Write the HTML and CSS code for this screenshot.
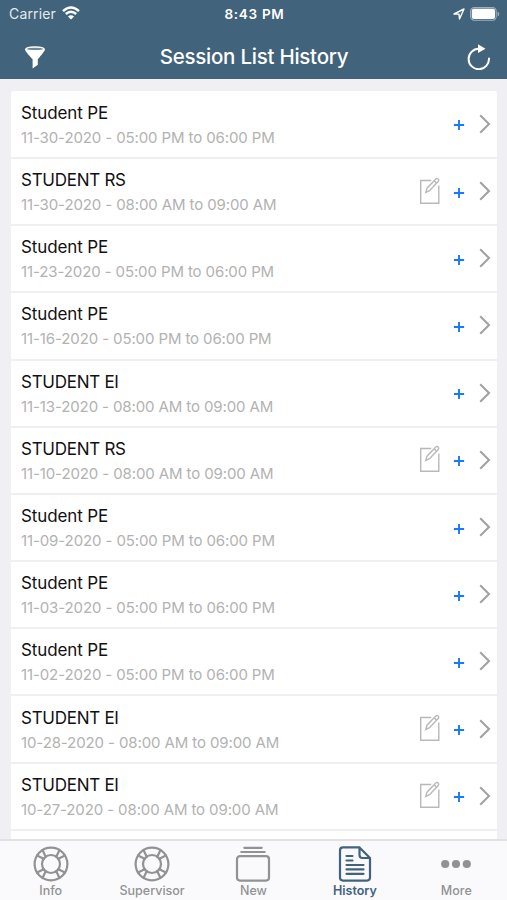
FILE: index.html
```
<!DOCTYPE html>
<html lang="en">
<head>
    <meta charset="UTF-8">
    <meta name="viewport" content="width=device-width, initial-scale=1">
    <title>Session List History</title>
    <link rel="stylesheet" href="styles.css">
</head>
<body>
<svg class="sprite">
    <symbol id="edit" viewBox="0 0 22 28">
        <path d="M12.2 3.5H1.7v22.8h18.1V8.5M6.8 15.4l1.2-4.2 8.8-9.2q1.2-1.2 2.4 0t0 2.5l-8.7 9.2zM15.2 3.8l2.4 2.4"/>
    </symbol>
    <symbol id="plus" viewBox="0 0 12 12">
        <path d="M6 .9v10.2M.9 6h10.2"/>
    </symbol>
    <symbol id="chevron" viewBox="0 0 12 20">
        <path d="M1.2 1.2 10 10l-8.8 8.8"/>
    </symbol>
    <symbol id="buoy" viewBox="0 0 36 36">
        <circle cx="18" cy="18" r="16.4"/>
        <circle cx="18" cy="18" r="9"/>
        <path d="M12.7 10.7 9.5 4M10.7 12.7 4 9.5M23.3 10.7 26.5 4M25.3 12.7 32 9.5M12.7 25.3 9.5 32M10.7 23.3 4 26.5M23.3 25.3 26.5 32M25.3 23.3 32 26.5"/>
    </symbol>
</svg>
<header>
    <div class="status">
        <div class="carrier">
            <span>Carrier</span>
            <svg class="wifi" viewBox="0 0 18 14">
                <path d="M1 5.1Q9-2.1 17 5.1M3.8 8Q9 3.4 14.2 8"/>
                <path class="fill" d="M9 13.5 5.9 10.4Q9 7.9 12.1 10.4z"/>
            </svg>
        </div>
        <div class="time">8:43 PM</div>
        <div class="power">
            <svg class="location" viewBox="0 0 12 12">
                <path d="M1 6 11 1 6.5 11 6 6.1z"/>
            </svg>
            <svg class="battery" viewBox="0 0 30 14">
                <rect class="shell" x=".6" y=".6" width="25.6" height="12.6" rx="3.6"/>
                <rect class="level" x="1.8" y="1.8" width="23.2" height="10.2" rx="2"/>
                <path class="tip" d="M27.6 4.6v4.8q1.7-.8 1.7-2.4t-1.7-2.4z"/>
            </svg>
        </div>
    </div>
    <div class="nav">
        <svg class="filter" viewBox="0 0 20 23">
            <path class="fill" d="M0 3.2Q.3.3 10 .3t10 2.9c0 1.8-3.6 5.6-7.2 10v5.6L7.6 22.5v-9.3C3.6 8.8 0 5 0 3.2z"/>
            <ellipse cx="10" cy="2.9" rx="8" ry="1.2"/>
        </svg>
        <h1>Session List History</h1>
        <svg class="reload" viewBox="0 0 24 26">
            <path class="line" d="M22 14.5A10.2 10.2 0 1 1 11.8 4.8"/>
            <path class="fill" d="M11 .2 18.5 4.7l-7.5 4.2z"/>
        </svg>
    </div>
</header>
<main>
    <ul class="sessions">
        <li>
            <div class="info"><h2>Student PE</h2><p>11-30-2020 - 05:00 PM to 06:00 PM</p></div>
            <svg class="plus"><use href="#plus"/></svg>
            <svg class="chevron"><use href="#chevron"/></svg>
        </li>
        <li>
            <div class="info"><h2 class="upper">STUDENT RS</h2><p>11-30-2020 - 08:00 AM to 09:00 AM</p></div>
            <svg class="edit"><use href="#edit"/></svg>
            <svg class="plus"><use href="#plus"/></svg>
            <svg class="chevron"><use href="#chevron"/></svg>
        </li>
        <li>
            <div class="info"><h2>Student PE</h2><p>11-23-2020 - 05:00 PM to 06:00 PM</p></div>
            <svg class="plus"><use href="#plus"/></svg>
            <svg class="chevron"><use href="#chevron"/></svg>
        </li>
        <li>
            <div class="info"><h2>Student PE</h2><p>11-16-2020 - 05:00 PM to 06:00 PM</p></div>
            <svg class="plus"><use href="#plus"/></svg>
            <svg class="chevron"><use href="#chevron"/></svg>
        </li>
        <li>
            <div class="info"><h2 class="upper">STUDENT EI</h2><p>11-13-2020 - 08:00 AM to 09:00 AM</p></div>
            <svg class="plus"><use href="#plus"/></svg>
            <svg class="chevron"><use href="#chevron"/></svg>
        </li>
        <li>
            <div class="info"><h2 class="upper">STUDENT RS</h2><p>11-10-2020 - 08:00 AM to 09:00 AM</p></div>
            <svg class="edit"><use href="#edit"/></svg>
            <svg class="plus"><use href="#plus"/></svg>
            <svg class="chevron"><use href="#chevron"/></svg>
        </li>
        <li>
            <div class="info"><h2>Student PE</h2><p>11-09-2020 - 05:00 PM to 06:00 PM</p></div>
            <svg class="plus"><use href="#plus"/></svg>
            <svg class="chevron"><use href="#chevron"/></svg>
        </li>
        <li>
            <div class="info"><h2>Student PE</h2><p>11-03-2020 - 05:00 PM to 06:00 PM</p></div>
            <svg class="plus"><use href="#plus"/></svg>
            <svg class="chevron"><use href="#chevron"/></svg>
        </li>
        <li>
            <div class="info"><h2>Student PE</h2><p>11-02-2020 - 05:00 PM to 06:00 PM</p></div>
            <svg class="plus"><use href="#plus"/></svg>
            <svg class="chevron"><use href="#chevron"/></svg>
        </li>
        <li>
            <div class="info"><h2 class="upper">STUDENT EI</h2><p>10-28-2020 - 08:00 AM to 09:00 AM</p></div>
            <svg class="edit"><use href="#edit"/></svg>
            <svg class="plus"><use href="#plus"/></svg>
            <svg class="chevron"><use href="#chevron"/></svg>
        </li>
        <li>
            <div class="info"><h2 class="upper">STUDENT EI</h2><p>10-27-2020 - 08:00 AM to 09:00 AM</p></div>
            <svg class="edit"><use href="#edit"/></svg>
            <svg class="plus"><use href="#plus"/></svg>
            <svg class="chevron"><use href="#chevron"/></svg>
        </li>
        <li></li>
    </ul>
</main>
<footer>
    <div class="tab">
        <svg class="icon" viewBox="0 0 36 36"><use href="#buoy"/></svg>
        <span>Info</span>
    </div>
    <div class="tab">
        <svg class="icon" viewBox="0 0 36 36"><use href="#buoy"/></svg>
        <span>Supervisor</span>
    </div>
    <div class="tab">
        <svg class="icon" viewBox="0 0 36 36">
            <rect x="2" y="10.2" width="32" height="24.4" rx="3"/>
            <path d="M9.3 1.8h17.4M6.3 6h23.4"/>
        </svg>
        <span>New</span>
    </div>
    <div class="tab active">
        <svg class="icon" viewBox="0 0 36 36">
            <path d="M22.5 1.4H6q-3 0-3 3v27.2q0 3 3 3h24q3 0 3-3V12L22.5 1.4V9q0 3 3 3H33"/>
            <path d="M9.5 10h6M9.5 14.5h6M9.5 19h17M9.5 23.4h17M9.5 27.8h17"/>
        </svg>
        <span>History</span>
    </div>
    <div class="tab">
        <svg class="icon dots" viewBox="0 0 36 36">
            <circle cx="7.2" cy="18" r="4.1"/>
            <circle cx="18" cy="18" r="4.1"/>
            <circle cx="28.8" cy="18" r="4.1"/>
        </svg>
        <span>More</span>
    </div>
</footer>
</body>
</html>
```
FILE: styles.css
```
* {
    margin: 0;
    padding: 0;
    box-sizing: border-box;
}

body {
    display: flex;
    flex-direction: column;
    height: 900px;
    overflow: hidden;
    background: #efeff4;
    font-family: Inter, "Liberation Sans", sans-serif;
}

svg {
    display: block;
    flex: none;
    fill: none;
}

.sprite {
    display: none;
}

header {
    flex: none;
    height: 79px;
    background: #42637c;
    color: #fff;
}

.status {
    display: grid;
    grid-template-columns: 1fr auto 1fr;
    align-items: center;
    height: 27px;
    padding: 0 7px 0 9px;
    font-size: 13.5px;
}

.carrier, .power {
    display: flex;
    align-items: center;
}

.carrier {
    gap: 6px;
    color: #e3e9ee;
    font-size: 14px;
    letter-spacing: .15px;
}

.time {
    font-weight: 600;
    letter-spacing: .7px;
}

.power {
    justify-content: flex-end;
    gap: 5px;
}

.wifi {
    width: 18px;
    height: 14px;
    margin-top: -2px;
    stroke: #fff;
    stroke-width: 2.5;
}

.fill {
    fill: #fff;
    stroke: none;
}

.location {
    width: 12px;
    height: 12px;
    stroke: #fff;
    stroke-width: 1.4;
    stroke-linejoin: round;
}

.battery {
    width: 30px;
    height: 14px;
}

.shell {
    stroke: #a0b1bd;
    stroke-width: 1.1;
}

.level {
    fill: #fff;
}

.tip {
    fill: #a0b1bd;
}

.nav {
    display: flex;
    align-items: center;
    justify-content: space-between;
    height: 52px;
    padding: 8px 16px 0 25px;
}

.filter {
    width: 20px;
    height: 23px;
}

.filter ellipse {
    fill: #6e889b;
}

h1 {
    font-size: 20.5px;
    font-weight: 500;
    line-height: 24px;
    letter-spacing: -.25px;
    margin-right: 4px;
}

.reload {
    width: 24px;
    height: 26px;
}

.reload .line {
    stroke: #fff;
    stroke-width: 2;
    stroke-linecap: round;
}

main {
    flex: 1;
    min-height: 0;
    padding: 12px 10px 0 11px;
    overflow: hidden;
}

.sessions {
    padding-top: .8px;
    list-style: none;
    border-radius: 3px 3px 0 0;
    overflow: hidden;
    background: #fff;
}

li {
    display: flex;
    align-items: center;
    height: 67.2px;
    padding: 0 6px 0 10px;
    border-bottom: 2px solid #efeff1;
}

.info {
    flex: 1;
    padding-top: 2px;
    white-space: nowrap;
}

h2 {
    font-size: 17px;
    font-weight: 400;
    line-height: 24px;
    letter-spacing: -.12px;
    color: #111;
}

.upper {
    letter-spacing: -.27px;
}

p {
    font-size: 15px;
    line-height: 25px;
    letter-spacing: -.11px;
    color: #b2b2b2;
}

.edit {
    width: 22px;
    height: 28px;
    margin: -2px 12px 0 0;
    stroke: #b9b9b9;
    stroke-width: 1.4;
}

.plus {
    width: 12px;
    height: 12px;
    margin: 2px 14px 0 0;
    stroke: #167bf5;
    stroke-width: 1.9;
}

.chevron {
    width: 12px;
    height: 20px;
    margin-top: -1px;
    stroke: #a2a2a2;
    stroke-width: 2.1;
}

footer {
    display: grid;
    grid-template-columns: repeat(5, 1fr);
    flex: none;
    height: 61px;
    border-top: 2px solid #e1e1e4;
    background: #fafafc;
    color: #929294;
}

.tab {
    display: flex;
    flex-direction: column;
    align-items: center;
    padding-top: 5px;
    font-size: 12.5px;
    font-weight: 500;
    line-height: 18px;
}

.icon {
    width: 36px;
    height: 36px;
    stroke: currentColor;
    stroke-width: 2.2;
    stroke-linecap: round;
    stroke-linejoin: round;
}

.dots {
    fill: currentColor;
    stroke: none;
}

.active {
    color: #42637c;
    font-weight: 600;
}
```
